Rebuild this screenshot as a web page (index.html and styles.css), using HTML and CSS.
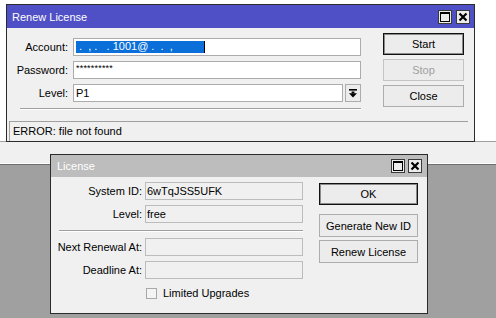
FILE: index.html
```html
<!DOCTYPE html>
<html lang="en">
<head>
  <meta charset="UTF-8" />
  <title>Renew License</title>
  <link rel="stylesheet" href="styles.css">
</head>
<body>
  <div class="desktop">
    <div class="top-area"></div>
    <div class="toolbar"></div>
    <div class="workspace"></div>

    <!-- Renew License dialog -->
    <div class="window renew">
      <div class="titlebar">
        <span class="title">Renew License</span>
        <div class="title-buttons">
          <button class="tb-btn"><svg width="10" height="10" viewBox="0 0 10 10"><rect x="0.5" y="0.5" width="9" height="9" fill="none" stroke="#000"/><rect x="0" y="0" width="10" height="2" fill="#000"/></svg></button>
          <button class="tb-btn"><svg width="10" height="10" viewBox="0 0 10 10"><path d="M1.5 1.5 L8.5 8.5 M8.5 1.5 L1.5 8.5" stroke="#000" stroke-width="2.2"/></svg></button>
        </div>
      </div>
      <div class="win-body">
        <div class="main-row">
          <div class="form renew-form">
            <label>Account:</label>
            <div class="field white"><span class="selection">&nbsp;.&nbsp;&nbsp;,&nbsp;.&nbsp;&nbsp;&nbsp;.&nbsp;1001@&nbsp;.&nbsp;&nbsp;.&nbsp;&nbsp;,&nbsp;</span><span class="caret"></span></div>
            <label>Password:</label>
            <div class="field white"><span class="stars">**********</span></div>
            <label>Level:</label>
            <div class="combo">
              <div class="field white">P1</div>
              <button class="drop-btn"><svg width="8" height="9" viewBox="0 0 8 9"><rect x="0" y="0" width="8" height="1.6" fill="#000"/><rect x="2.6" y="2.5" width="2.8" height="2" fill="#000"/><polygon points="0,4.3 8,4.3 4,8.5" fill="#000"/></svg></button>
            </div>
            <div class="separator"></div>
          </div>
          <div class="buttons renew-buttons">
            <button class="btn default">Start</button>
            <button class="btn" disabled>Stop</button>
            <button class="btn">Close</button>
          </div>
        </div>
        <div class="status">ERROR: file not found</div>
      </div>
    </div>

    <!-- License dialog -->
    <div class="window license">
      <div class="titlebar inactive">
        <span class="title">License</span>
        <div class="title-buttons">
          <button class="tb-btn"><svg width="10" height="10" viewBox="0 0 10 10"><rect x="0.5" y="0.5" width="9" height="9" fill="none" stroke="#000"/><rect x="0" y="0" width="10" height="2" fill="#000"/></svg></button>
          <button class="tb-btn"><svg width="10" height="10" viewBox="0 0 10 10"><path d="M1.5 1.5 L8.5 8.5 M8.5 1.5 L1.5 8.5" stroke="#000" stroke-width="2.2"/></svg></button>
        </div>
      </div>
      <div class="win-body">
        <div class="main-row">
          <div class="form license-form">
            <label>System ID:</label>
            <div class="field ro">6wTqJSS5UFK</div>
            <label>Level:</label>
            <div class="field ro">free</div>
            <div class="separator"></div>
            <label>Next Renewal At:</label>
            <div class="field ro"></div>
            <label>Deadline At:</label>
            <div class="field ro"></div>
            <div></div>
            <div class="check-row"><span class="checkbox"></span>Limited Upgrades</div>
          </div>
          <div class="buttons license-buttons">
            <button class="btn default ok">OK</button>
            <button class="btn gen">Generate New ID</button>
            <button class="btn renew-btn">Renew License</button>
          </div>
        </div>
      </div>
    </div>
  </div>
</body>
</html>
```

FILE: styles.css
```css
body {
  margin: 0;
  font-family: 'Liberation Sans', Arial, sans-serif;
  font-size: 11px;
  color: #000;
}

.desktop {
  position: relative;
  width: 496px;
  height: 318px;
  display: flex;
  flex-direction: column;
  overflow: hidden;
}

.top-area {
  height: 141px;
  background: #fff;
}

.toolbar {
  height: 21px;
  background: #f0f0f0;
  border-top: 1px solid #a0a0a0;
  border-bottom: 1px solid #fff;
}

.workspace {
  flex: 1;
  background: #a0a0a0;
  border-top: 1px solid #6e6e6e;
}

/* windows */
.window {
  position: absolute;
  background: #f0f0f0;
  border: 1px solid #2b2b2b;
  display: flex;
  flex-direction: column;
}

.renew {
  left: 6px;
  top: 4px;
  width: 467px;
  height: 136px;
}

.license {
  left: 50px;
  top: 154px;
  width: 376px;
  height: 158px;
}

.titlebar {
  height: 23px;
  background: #4f50c6;
  color: #fff;
  display: flex;
  align-items: center;
  justify-content: space-between;
  padding: 0 4px 0 5px;
}

.titlebar.inactive {
  height: 22px;
  background: #bdbdbd;
  padding: 0 5px 0 6px;
}

.title {
  font-size: 11px;
}

.title-buttons {
  display: flex;
  gap: 4px;
}

.inactive .title-buttons {
  gap: 3px;
}

.tb-btn {
  width: 14px;
  height: 14px;
  padding: 0;
  border: 1px solid #3a3a3a;
  background: #ececec;
  display: flex;
  align-items: center;
  justify-content: center;
}

.win-body {
  flex: 1;
  display: flex;
  flex-direction: column;
}

.main-row {
  display: flex;
  align-items: flex-start;
}

/* forms */
.form {
  display: grid;
  align-items: center;
}

.renew-form {
  grid-template-columns: 58px 288px;
  column-gap: 5px;
  row-gap: 5px;
  padding: 10px 0 0 3px;
}

.license-form {
  grid-template-columns: 87px 158px;
  column-gap: 3px;
  row-gap: 5px;
  padding: 5px 0 0 4px;
}

.form label {
  text-align: right;
  white-space: nowrap;
}

.field {
  height: 18px;
  box-sizing: border-box;
  border: 1px solid #acacac;
  display: flex;
  align-items: center;
  white-space: nowrap;
  overflow: hidden;
}

.field.white {
  background: #fff;
  padding-left: 2px;
}

.field.ro {
  background: #f0f0f0;
  border-color: #bcbcbc;
  padding-left: 1px;
}

.selection {
  background: #0a6fd8;
  color: #fff;
  height: 12px;
  line-height: 11px;
  width: 128px;
  overflow: hidden;
  font-size: 11px;
}

.caret {
  width: 1px;
  height: 12px;
  background: #000;
}

.stars {
  font-size: 9px;
  letter-spacing: 0.2px;
  position: relative;
  top: -2px;
}

.combo {
  display: flex;
  gap: 2px;
}

.combo .field {
  flex: 1;
}

.drop-btn {
  width: 16px;
  height: 18px;
  padding: 0;
  border: 1px solid #acacac;
  background: #ececec;
  display: flex;
  align-items: center;
  justify-content: center;
}

.separator {
  grid-column: 1 / span 2;
  height: 1px;
  background: #a0a0a0;
  border-bottom: 1px solid #fff;
}

.renew-form .separator {
  margin: 1px 0 0 10px;
}

.license-form .separator {
  margin: 2px 0 1px 4px;
}

.check-row {
  display: flex;
  align-items: center;
  gap: 6px;
  padding-left: 1px;
  margin-top: 3px;
}

.checkbox {
  width: 11px;
  height: 11px;
  box-sizing: border-box;
  border: 1px solid #a8a8a8;
  background: #f4f4f4;
}

/* buttons */
.buttons {
  display: flex;
  flex-direction: column;
}

.renew-buttons {
  width: 81px;
  margin-left: 22px;
  padding-top: 5px;
  gap: 4px;
}

.license-buttons {
  width: 99px;
  margin-left: 16px;
  padding-top: 6px;
}

.btn {
  height: 22px;
  padding: 0;
  font-family: 'Liberation Sans', Arial, sans-serif;
  font-size: 11px;
  color: #000;
  background: #ececec;
  border: 1px solid #adadad;
}

.btn.default {
  border: 1px solid #111;
  box-shadow: inset 0 0 0 1px #8a8a8a;
}

.btn:disabled {
  color: #a0a0a0;
  border-color: #c4c4c4;
}

.license-buttons .gen {
  height: 23px;
  margin-top: 9px;
}

.license-buttons .renew-btn {
  height: 23px;
  margin-top: 3px;
}

/* status bar */
.status {
  flex: 1;
  margin: 11px 6px 0 2px;
  border-top: 1px solid #a0a0a0;
  border-left: 1px solid #a0a0a0;
  padding: 3px 0 0 3px;
}
```
